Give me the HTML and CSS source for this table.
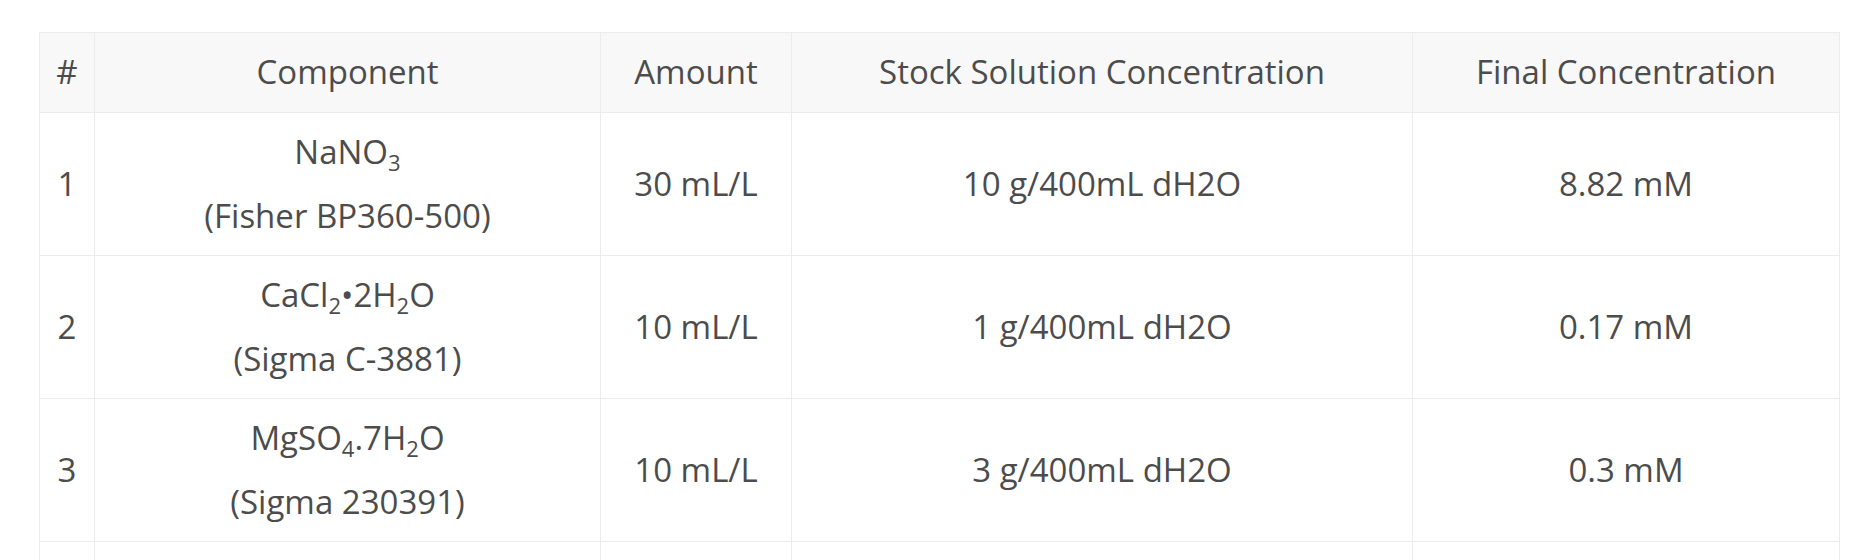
FILE: index.html
```html
<!DOCTYPE html>
<html lang="en">
<head>
    <meta charset="UTF-8">
    <meta name="viewport" content="width=device-width, initial-scale=1.0">
    <title>BG-11 Stock Solutions</title>
    <link rel="stylesheet" href="styles.css">
</head>
<body>
    <div class="table-wrap">
        <table class="recipe">
            <colgroup>
                <col class="col-num">
                <col class="col-component">
                <col class="col-amount">
                <col class="col-stock">
                <col class="col-final">
            </colgroup>
            <thead>
                <tr>
                    <th>#</th>
                    <th>Component</th>
                    <th>Amount</th>
                    <th>Stock Solution Concentration</th>
                    <th>Final Concentration</th>
                </tr>
            </thead>
            <tbody>
                <tr>
                    <td>1</td>
                    <td>NaNO<sub>3</sub><br>(Fisher BP360-500)</td>
                    <td>30 mL/L</td>
                    <td>10 g/400mL dH2O</td>
                    <td>8.82 mM</td>
                </tr>
                <tr>
                    <td>2</td>
                    <td>CaCl<sub>2</sub>•2H<sub>2</sub>O<br>(Sigma C-3881)</td>
                    <td>10 mL/L</td>
                    <td>1 g/400mL dH2O</td>
                    <td>0.17 mM</td>
                </tr>
                <tr>
                    <td>3</td>
                    <td>MgSO<sub>4</sub>.7H<sub>2</sub>O<br>(Sigma 230391)</td>
                    <td>10 mL/L</td>
                    <td>3 g/400mL dH2O</td>
                    <td>0.3 mM</td>
                </tr>
                <tr class="row-next">
                    <td></td>
                    <td></td>
                    <td></td>
                    <td></td>
                    <td></td>
                </tr>
            </tbody>
        </table>
    </div>
</body>
</html>
```

FILE: styles.css
```css
* {
    margin: 0;
    padding: 0;
    box-sizing: border-box;
}

body {
    font-family: 'Open Sans', 'Noto Sans', sans-serif;
    color: #4c4c4c;
    background: #fff;
    overflow: hidden;
}

.table-wrap {
    padding: 32px 13px 0 39px;
}

.recipe {
    width: 1800px;
    table-layout: fixed;
    border-collapse: collapse;
    font-size: 33px;
    line-height: 64px;
}

.col-num { width: 55px; }
.col-component { width: 506px; }
.col-amount { width: 191px; }
.col-stock { width: 621px; }
.col-final { width: 427px; }

.recipe th,
.recipe td {
    border: 1px solid #ececec;
    padding: 7px 4px;
    text-align: center;
    vertical-align: middle;
    font-weight: 400;
}

.recipe th {
    background: #f8f8f8;
    padding-bottom: 8px;
}

.recipe .row-next td {
    height: 143px;
}

.recipe sub {
    font-size: 22px;
    line-height: 0;
    vertical-align: -7px;
}
```
